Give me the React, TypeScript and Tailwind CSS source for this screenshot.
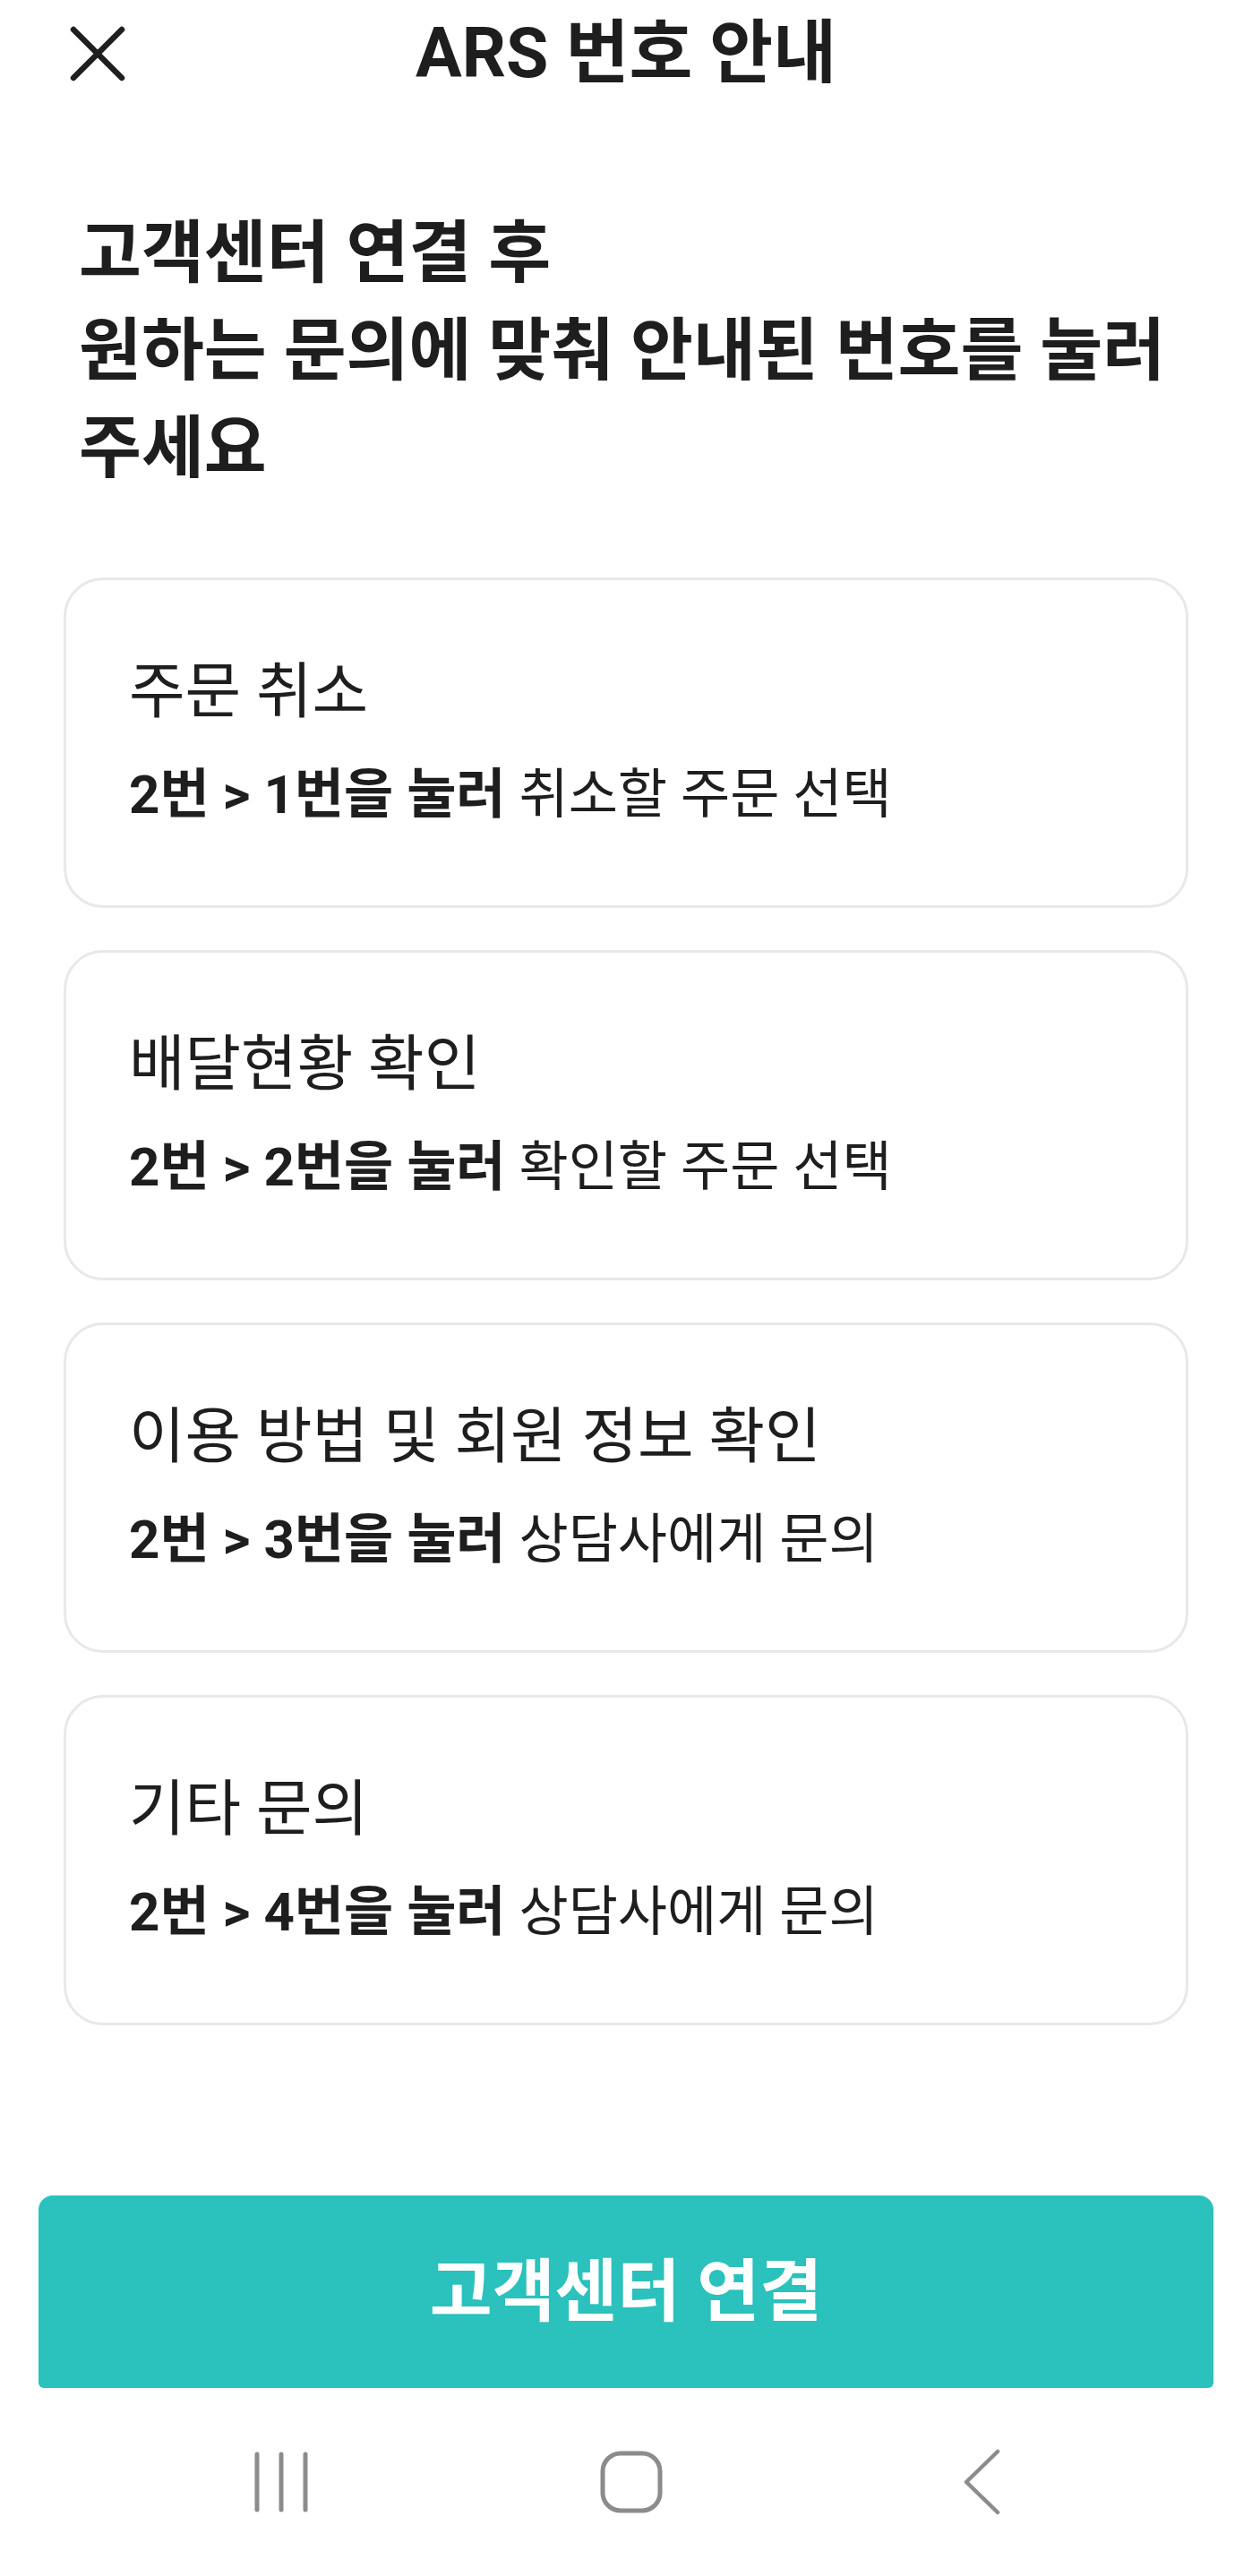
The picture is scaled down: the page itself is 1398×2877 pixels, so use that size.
import React from "react";

const FONT = { fontFamily: 'Roboto, "Noto Sans CJK KR", sans-serif' };

type Item = { title: string; bold: string; rest: string };

const items: Item[] = [
  { title: "주문 취소", bold: "2번 > 1번을 눌러", rest: "취소할 주문 선택" },
  { title: "배달현황 확인", bold: "2번 > 2번을 눌러", rest: "확인할 주문 선택" },
  { title: "이용 방법 및 회원 정보 확인", bold: "2번 > 3번을 눌러", rest: "상담사에게 문의" },
  { title: "기타 문의", bold: "2번 > 4번을 눌러", rest: "상담사에게 문의" },
];

function Card({ item }: { item: Item }) {
  return (
    <div className="h-[369px] rounded-[44px] border-[3px] border-[#e8e8e8] bg-white flex flex-col justify-center pl-[70px]">
      <div className="text-[68px] leading-[76px] text-[#1e1e1e] font-normal whitespace-nowrap">{item.title}</div>
      <div className="mt-[41px] text-[60px] leading-[72px] text-[#1e1e1e] whitespace-nowrap">
        <span className="font-bold">{item.bold}</span> <span className="font-normal">{item.rest}</span>
      </div>
    </div>
  );
}

export default function App() {
  return (
    <div className="w-[1398px] h-[2877px] bg-white flex flex-col overflow-hidden" style={FONT}>
      {/* header */}
      <div className="h-[120px] grid grid-cols-[1fr_auto_1fr] items-center">
        <div className="pl-[78px] flex items-center">
          <svg width="62" height="62" viewBox="0 0 62 62" fill="none" stroke="#1e1f21" strokeWidth="6.5" strokeLinecap="round">
            <line x1="4" y1="4" x2="58" y2="58" />
            <line x1="58" y1="4" x2="4" y2="58" />
          </svg>
        </div>
        <div className="text-[77px] leading-[90px] font-bold text-[#1e1e1e] whitespace-nowrap">ARS 번호 안내</div>
        <div />
      </div>

      {/* heading */}
      <div className="mt-[109px] px-[88px] text-[76px] leading-[109px] font-bold text-[#1e1e1e]">
        <div className="whitespace-nowrap">고객센터 연결 후</div>
        <div className="whitespace-nowrap">원하는 문의에 맞춰 안내된 번호를 눌러</div>
        <div className="whitespace-nowrap">주세요</div>
      </div>

      {/* cards */}
      <div className="mt-[89px] px-[71px] flex flex-col gap-[47px]">
        {items.map((it) => (
          <Card key={it.title} item={it} />
        ))}
      </div>

      {/* button */}
      <div className="mt-[190px] mx-[43px] h-[215px] bg-[#2bc1bc] rounded-t-[16px] rounded-b-[6px] flex items-center justify-center">
        <span className="text-[76px] leading-[90px] font-bold text-white whitespace-nowrap">고객센터 연결</span>
      </div>

      {/* nav bar */}
      <div className="h-[210px] bg-white flex items-center pl-[264px] gap-[291px]">
        <div className="w-[100px] flex items-center justify-center">
          <svg width="60" height="68" viewBox="0 0 60 68" fill="none" stroke="#8c8c8c" strokeWidth="5" strokeLinecap="round">
            <line x1="3" y1="3" x2="3" y2="65" />
            <line x1="30" y1="3" x2="30" y2="65" />
            <line x1="57" y1="3" x2="57" y2="65" />
          </svg>
        </div>
        <div className="w-[100px] flex items-center justify-center">
          <svg width="70" height="70" viewBox="0 0 70 70" fill="none" stroke="#8c8c8c" strokeWidth="5">
            <rect x="3" y="3" width="64" height="64" rx="20" />
          </svg>
        </div>
        <div className="w-[100px] flex items-center justify-center">
          <svg width="44" height="74" viewBox="0 0 44 74" fill="none" stroke="#8c8c8c" strokeWidth="4.5" strokeLinecap="round" strokeLinejoin="round">
            <polyline points="40,3 5,37 40,71" />
          </svg>
        </div>
      </div>
    </div>
  );
}
